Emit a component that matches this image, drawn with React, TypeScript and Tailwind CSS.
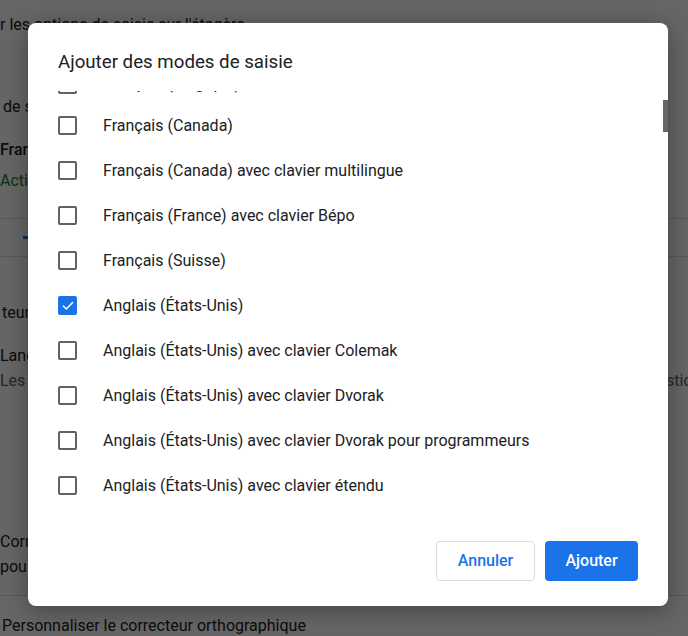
import { Check } from "lucide-react";

const modes = [
  { label: "Français (Belgique)", checked: false },
  { label: "Français (Canada)", checked: false },
  { label: "Français (Canada) avec clavier multilingue", checked: false },
  { label: "Français (France) avec clavier Bépo", checked: false },
  { label: "Français (Suisse)", checked: false },
  { label: "Anglais (États-Unis)", checked: true },
  { label: "Anglais (États-Unis) avec clavier Colemak", checked: false },
  { label: "Anglais (États-Unis) avec clavier Dvorak", checked: false },
  { label: "Anglais (États-Unis) avec clavier Dvorak pour programmeurs", checked: false },
  { label: "Anglais (États-Unis) avec clavier étendu", checked: false },
  { label: "Anglais (États-Unis) avec clavier international", checked: false },
];

function Checkbox({ checked }: { checked: boolean }) {
  if (checked) {
    return (
      <span className="flex h-[19px] w-[19px] shrink-0 items-center justify-center rounded-[2px] bg-[#1a73e8]">
        <Check className="h-[14px] w-[14px] text-white" strokeWidth={2.5} />
      </span>
    );
  }
  return <span className="h-[19px] w-[19px] shrink-0 rounded-[2px] border-2 border-[#5f6368]" />;
}

function SettingsPage() {
  return (
    <div className="flex h-[636px] w-[688px] flex-col overflow-hidden bg-white text-[16px] leading-5 text-[#202124]">
      <div className="mt-[15px] h-5 whitespace-nowrap">r les options de saisie sur l'étagère</div>
      <div className="mt-[62px] h-5 pl-[3px] whitespace-nowrap">de saisie</div>
      <div className="mt-[23px] h-5 font-medium">Français</div>
      <div className="mt-[11px] h-5 text-[#188038]">Activé</div>
      <div className="mt-[27px] h-px bg-[#dadce0]" />
      <div className="mt-[17px] ml-[23px] h-[3px] w-[6px] bg-[#1a73e8]" />
      <div className="mt-[17px] h-px bg-[#dadce0]" />
      <div className="mt-[46px] h-5 pl-[2px] whitespace-nowrap">teur orthographique</div>
      <div className="mt-[23px] h-5">Langues</div>
      <div className="mt-[5px] flex h-5 text-[#5f6368]">
        <span className="w-[666px] shrink-0">Les</span>
        <span className="whitespace-nowrap">stiques</span>
      </div>
      <div className="mt-[141px] h-5">Correction orthographique</div>
      <div className="mt-[5px] h-5">pour</div>
      <div className="mt-[18px] h-px bg-[#dadce0]" />
      <div className="mt-[20px] h-5 pl-[2px] whitespace-nowrap">Personnaliser le correcteur orthographique</div>
    </div>
  );
}

export default function App() {
  return (
    <div className="relative h-[636px] w-[688px] overflow-hidden" style={{ fontFamily: "Roboto, 'Noto Sans', sans-serif" }}>
      <SettingsPage />
      <div className="absolute inset-0 bg-black/60" />
      <div className="absolute left-[28px] top-[23px] flex w-[640px] flex-col rounded-[8px] bg-white shadow-[0_4px_24px_rgba(0,0,0,0.35)]">
        <h2 className="px-[30px] pt-[27px] text-[18.7px] leading-6 font-normal text-[#202124]">
          Ajouter des modes de saisie
        </h2>
        <div className="relative mt-[17px] h-[421px] overflow-hidden">
          <ul className="-mt-[26px]">
            {modes.map((mode, i) => (
              <li
                key={mode.label}
                className={`flex items-center px-[30px] ${i === 0 ? "h-[38px]" : "h-[45px]"}`}
              >
                <Checkbox checked={mode.checked} />
                <span className="ml-[26px] text-[16px] text-[#202124]">{mode.label}</span>
              </li>
            ))}
          </ul>
        </div>
        <div className="absolute right-0 top-[77px] h-[32px] w-[5px] bg-[#666]" />
        <div className="flex justify-end gap-[10px] px-[30px] pt-[29px] pb-[25px]">
          <button
            type="button"
            className="h-10 w-[99px] rounded-[4px] border border-[#dadce0] bg-white text-[16px] font-medium text-[#1a73e8]"
          >
            Annuler
          </button>
          <button
            type="button"
            className="h-10 w-[93px] rounded-[4px] bg-[#1a73e8] text-[16px] font-medium text-white"
          >
            Ajouter
          </button>
        </div>
      </div>
    </div>
  );
}
